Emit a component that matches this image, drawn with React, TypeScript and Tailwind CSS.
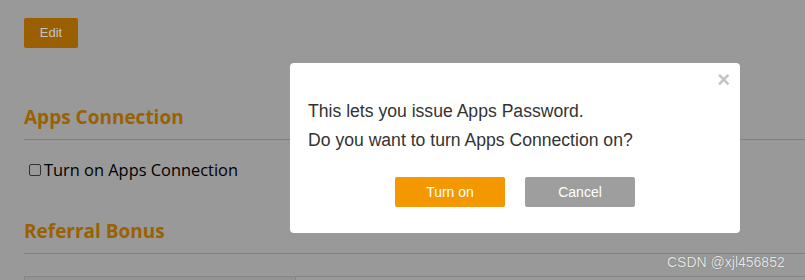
export default function App() {
  return (
    <div className="relative h-[280px] w-[805px] overflow-hidden bg-[#999999]">
      {/* page behind the overlay */}
      <div className="pl-6 pt-[18px]">
        <button className="h-[30px] w-[54px] rounded-[2px] bg-[#9a5f00] font-['Liberation_Sans',Arial,sans-serif] text-[13px] text-[#c4c4c4]">
          Edit
        </button>

        <h2 className="mt-[56px] font-['Open_Sans','Noto_Sans',sans-serif] text-[19px] font-bold leading-[26px] text-[#9a6100]">
          Apps Connection
        </h2>
        <div className="mt-[9px] h-px bg-[#808080]" />
        <label className="mt-[20px] flex items-center gap-[3px] font-['Open_Sans','Noto_Sans',sans-serif] text-[16.4px] leading-[20px] text-black">
          <span className="ml-[5px] inline-block h-[12px] w-[12px] rounded-[2px] border border-[#333]" />
          Turn on Apps Connection
        </label>

        <h2 className="mt-[38px] font-['Open_Sans','Noto_Sans',sans-serif] text-[19px] font-bold leading-[26px] text-[#9a6100]">
          Referral Bonus
        </h2>
        <div className="mt-[9px] h-px bg-[#808080]" />
        <div className="mt-[22px] flex h-[20px] border-t border-l border-[#858585]">
          <div className="w-[271px] border-r border-[#858585] bg-[#949494]" />
          <div className="flex-1" />
        </div>
      </div>

      {/* modal */}
      <div className="absolute left-[290px] top-[63px] h-[170px] w-[450px] rounded-[4px] bg-white font-['Liberation_Sans',Arial,sans-serif]">
        <span className="absolute right-[10px] top-[6px] text-[22px] font-bold leading-[22px] text-[#c4c4c4]">
          ×
        </span>
        <div className="px-[18px] pt-[34px] text-[17.6px] leading-[29px] text-[#333]">
          <p>This lets you issue Apps Password.</p>
          <p>Do you want to turn Apps Connection on?</p>
        </div>
        <div className="mt-[22px] flex justify-center gap-[20px]">
          <button className="h-[30px] w-[110px] rounded-[2px] bg-[#f39800] text-[14px] text-white">
            Turn on
          </button>
          <button className="h-[30px] w-[110px] rounded-[2px] bg-[#9e9e9e] text-[14px] text-white">
            Cancel
          </button>
        </div>
      </div>

      <span className="absolute left-[667px] top-[252px] font-['Liberation_Sans',Arial,sans-serif] text-[14px] text-[#e6e6e6] [text-shadow:0_0_1px_#555]">
        CSDN @xjl456852
      </span>
    </div>
  );
}
